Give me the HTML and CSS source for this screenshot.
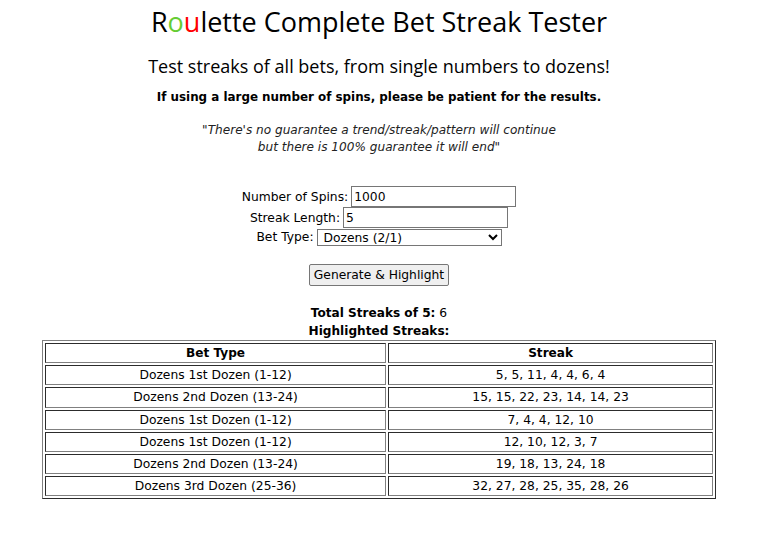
FILE: index.html
```html
<!DOCTYPE html>
<html lang="en">
<head>
    <meta charset="UTF-8">
    <title>Roulette Complete Bet Streak Tester</title>
    <link rel="stylesheet" href="styles.css">
</head>
<body>
    <h1>R<span class="green">o</span><span class="red">u</span>lette Complete Bet Streak Tester</h1>
    <h2>Test streaks of all bets, from single numbers to dozens!</h2>
    <p class="note">If using a large number of spins, please be patient for the results.</p>
    <p class="quote">"There's no guarantee a trend/streak/pattern will continue<br>but there is 100% guarantee it will end"</p>

    <form class="controls">
        <div class="row">
            <label for="spins">Number of Spins:</label>
            <input type="text" id="spins" value="1000">
        </div>
        <div class="row">
            <label for="length">Streak Length:</label>
            <input type="text" id="length" value="5">
        </div>
        <div class="row">
            <label for="bet">Bet Type:</label>
            <select id="bet">
                <option>Dozens (2/1)</option>
            </select>
        </div>
        <div class="row button-row">
            <button type="button">Generate &amp; Highlight</button>
        </div>
    </form>

    <div class="summary">
        <div><b>Total Streaks of 5:</b> 6</div>
        <div><b>Highlighted Streaks:</b></div>
    </div>

    <table border="1" class="results">
        <thead>
            <tr>
                <th>Bet Type</th>
                <th>Streak</th>
            </tr>
        </thead>
        <tbody>
            <tr><td>Dozens 1st Dozen (1-12)</td><td>5, 5, 11, 4, 4, 6, 4</td></tr>
            <tr><td>Dozens 2nd Dozen (13-24)</td><td>15, 15, 22, 23, 14, 14, 23</td></tr>
            <tr><td>Dozens 1st Dozen (1-12)</td><td>7, 4, 4, 12, 10</td></tr>
            <tr><td>Dozens 1st Dozen (1-12)</td><td>12, 10, 12, 3, 7</td></tr>
            <tr><td>Dozens 2nd Dozen (13-24)</td><td>19, 18, 13, 24, 18</td></tr>
            <tr><td>Dozens 3rd Dozen (25-36)</td><td>32, 27, 28, 25, 35, 28, 26</td></tr>
        </tbody>
    </table>
</body>
</html>
```

FILE: styles.css
```css
body {
    font-family: 'DejaVu Sans', Verdana, sans-serif;
    font-size: 12.3px;
    color: #000;
    background: #fff;
    margin: 8px;
    max-width: 742px;
    text-align: center;
}
h1 {
    font-family: 'Open Sans', 'Noto Sans', sans-serif;
    font-weight: normal;
    font-size: 27px;
    margin: 0;
    line-height: 28px;
}
h1 .green {
    color: #66cc33;
}
h1 .red {
    color: #ff0000;
}
h2 {
    font-family: 'Open Sans', 'Noto Sans', sans-serif;
    font-weight: normal;
    font-size: 18px;
    margin: 17px 0 0;
    line-height: 26px;
}
.note {
    font-weight: bold;
    font-size: 11.9px;
    margin: 10px 0 0;
    line-height: 16px;
}
.quote {
    font-style: italic;
    font-size: 12.1px;
    color: #222;
    margin: 17px 0 0;
    line-height: 17px;
}
.controls {
    margin-top: 30px;
}
.row {
    display: flex;
    justify-content: center;
    align-items: center;
    gap: 3px;
}
.row input {
    font: inherit;
    width: 165px;
    height: 21px;
    box-sizing: border-box;
    border: 1px solid #767676;
    padding: 1px 2px;
    margin: 0;
}
.row select {
    font: inherit;
    width: 185px;
    height: 17px;
    box-sizing: border-box;
    border: 1px solid #767676;
    padding: 0 2px;
    margin: 1px 0 0;
    background: #fff;
}
.button-row {
    margin-top: 18px;
}
.button-row button {
    font: inherit;
    height: 22px;
    padding: 0 4px;
    background: #efefef;
    border: 1px solid #767676;
    border-radius: 2px;
}
.summary {
    margin-top: 18px;
    line-height: 18px;
}
.summary b, .results th {
    font-size: 12.1px;
}
.results {
    width: 674px;
    margin: 0 auto;
    border-color: #808080;
}
.results th, .results td {
    padding: 1px;
    line-height: 16.2px;
}
```
